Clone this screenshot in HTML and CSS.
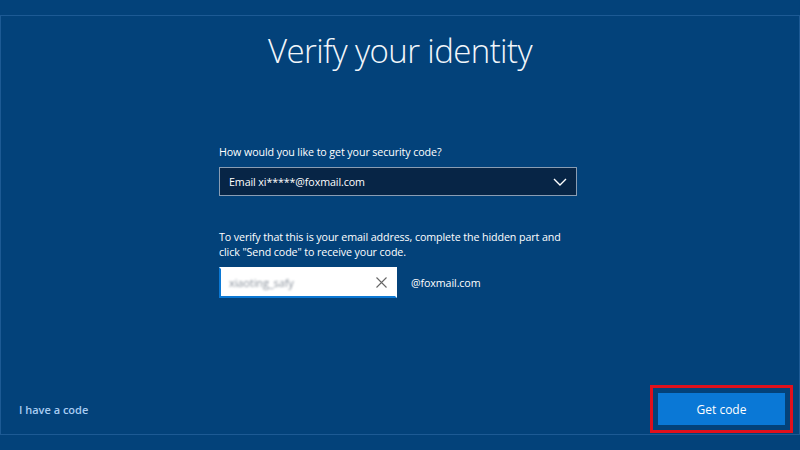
FILE: index.html
```html
<!DOCTYPE html>
<html lang="en">
<head>
  <meta charset="UTF-8">
  <title>Verify your identity</title>
  <link rel="stylesheet" href="styles.css">
</head>
<body>
  <div class="frame">
    <h1>Verify your identity</h1>

    <div class="form">
      <label class="label">How would you like to get your security code?</label>
      <div class="select">
        <span>Email xi*****@foxmail.com</span>
        <svg class="chevron" width="14" height="8" viewBox="0 0 14 8"><path d="M1 1 L7 7 L13 1" fill="none" stroke="#fff" stroke-width="1.4"/></svg>
      </div>

      <p class="hint">To verify that this is your email address, complete the hidden part and click "Send code" to receive your code.</p>

      <div class="email-row">
        <div class="textbox">
          <span class="typed">xiaoting_safy</span>
          <svg class="clear" width="11" height="11" viewBox="0 0 11 11"><path d="M0.5 0.5 L10.5 10.5 M10.5 0.5 L0.5 10.5" stroke="#666" stroke-width="1.1"/></svg>
        </div>
        <span class="domain">@foxmail.com</span>
      </div>
    </div>

    <div class="footer">
      <a class="link" href="#">I have a code</a>
      <button class="primary">Get code</button>
    </div>
  </div>
</body>
</html>
```

FILE: styles.css
```css
body {
  margin: 0;
  background: #03427a;
  font-family: 'Open Sans', 'Noto Sans', sans-serif;
  color: #fff;
}
.frame {
  margin-top: 15px;
  height: 418px;
  border: 1px solid #1d5a94;
  display: flex;
  flex-direction: column;
}
h1 {
  margin: 12px 0 0;
  text-align: center;
  font-weight: 300;
  font-size: 33px;
  letter-spacing: -0.6px;
  color: #f2f6fa;
}
.form {
  flex: 1;
  width: 358px;
  margin: 0 auto;
  padding: 72px 4px 0 0;
  font-size: 10.7px;
  letter-spacing: -0.1px;
}
.label {
  display: block;
  margin-bottom: 8px;
}
.select {
  height: 27px;
  border: 1px solid #8a9db3;
  background: #072546;
  display: flex;
  align-items: center;
  justify-content: space-between;
  padding: 0 9px;
}
.hint {
  margin: 34px 0 7px;
  line-height: 15px;
}
.email-row {
  display: flex;
  align-items: center;
  gap: 14px;
}
.textbox {
  width: 158px;
  height: 27px;
  background: #fff;
  border: 2px solid #fff;
  border-left-color: #0b78d4;
  border-bottom-color: #0b78d4;
  display: flex;
  align-items: center;
  justify-content: space-between;
  padding: 0 8px 0 8px;
}
.typed {
  color: #8a929c;
  font-size: 11px;
  filter: blur(1.2px);
}
.footer {
  display: flex;
  justify-content: space-between;
  align-items: center;
  padding: 0 14px 9px 18px;
}
.link {
  color: #a9cdf2;
  text-decoration: none;
  font-size: 11px;
  font-weight: 600;
}
.primary {
  width: 127px;
  height: 32px;
  border: none;
  background: #0a78d6;
  color: #fff;
  font-family: inherit;
  font-size: 12px;
  outline: 3px solid #e0101c;
  outline-offset: 5px;
}
```
